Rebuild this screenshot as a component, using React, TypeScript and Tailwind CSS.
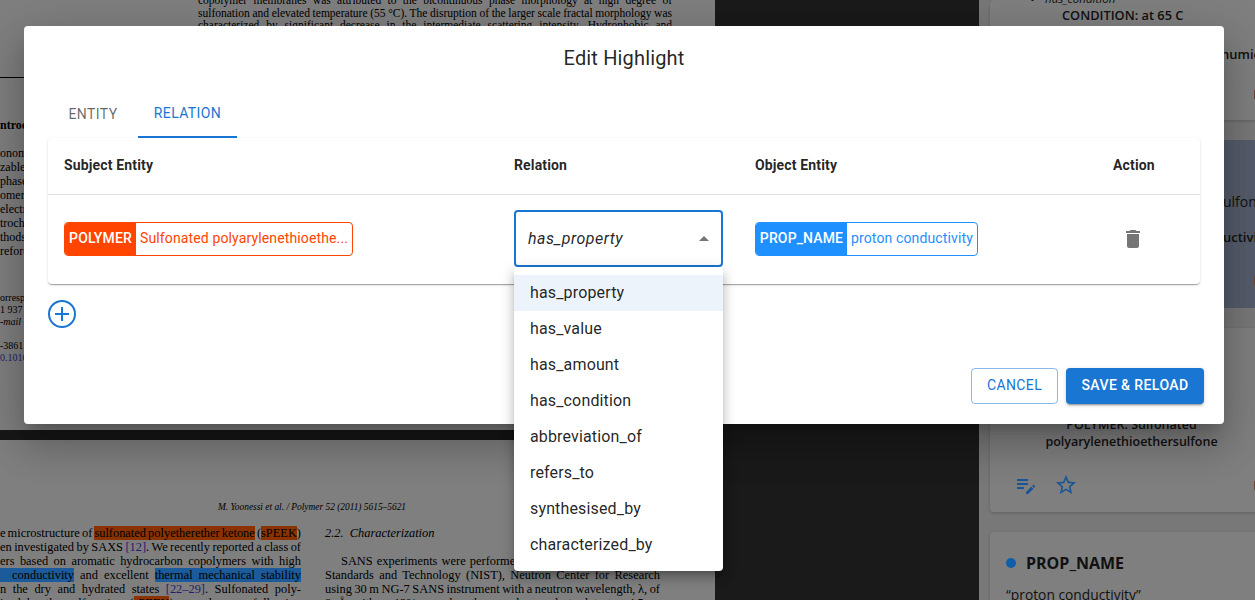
import React from "react";

const ROBOTO = "font-['Roboto',sans-serif]";
const SERIF = "font-['Liberation_Serif',serif]";
const PANEL = "font-['Open_Sans',sans-serif]";

function Icon({ d, size, className }: { d: string; size: number; className?: string }) {
  return (
    <svg viewBox="0 0 24 24" width={size} height={size} fill="currentColor" className={`shrink-0 ${className ?? ""}`}>
      <path d={d} />
    </svg>
  );
}

const O = ({ children }: { children: React.ReactNode }) => <span className="bg-[#8b3300]">{children}</span>;
const B = ({ children }: { children: React.ReactNode }) => <span className="bg-[#1b5a9b]">{children}</span>;
const C = ({ children }: { children: React.ReactNode }) => <span className="text-[#241a70]">{children}</span>;

function J({ children, className = "" }: { children: React.ReactNode; className?: string }) {
  return <div className={`whitespace-nowrap text-justify [text-align-last:justify] [word-spacing:-1.2px] ${className}`}>{children}</div>;
}

function PdfPages() {
  return (
    <div className={`flex w-[715px] shrink-0 flex-col text-black ${SERIF}`}>
      <div className="flex h-[430px] bg-[#7f7f7f]">
        <div className="w-[198px] shrink-0 text-[12px] leading-[14px]">
          <div className="mt-[77px] h-px w-[198px] bg-black" />
          <div className="mt-[40px] font-bold">ntroduction</div>
          <div className="mt-[14px] flex flex-col">
            <span>onomer</span>
            <span>zable</span>
            <span>phase</span>
            <span>omers</span>
            <span>electro</span>
            <span>trochem</span>
            <span>thods</span>
            <span>refore</span>
          </div>
          <div className="mt-[34px] flex flex-col text-[10px] leading-[12px]">
            <span>orresp</span>
            <span>1 937</span>
            <span className="italic">-mail</span>
            <span className="h-[12px]" />
            <span>-3861</span>
            <span className="text-[#241a70]">0.1016</span>
          </div>
        </div>
        <div className="-mt-[6px] w-[474px] text-[11.5px] leading-[12.5px]">
          <J>copolymer membranes was attributed to the bicontinuous phase morphology at high degree of</J>
          <J>sulfonation and elevated temperature (55 °C). The disruption of the larger scale fractal morphology was</J>
          <J>characterized by significant decrease in the intermediate scattering intensity. Hydrophobic and</J>
        </div>
      </div>
      <div className="h-[10px] bg-[#171717]" />
      <div className="flex-1 overflow-hidden bg-[#7f7f7f]">
        <div className="mt-[61px] ml-[218px] whitespace-nowrap text-[9.4px] italic leading-[12px]">
          M. Yoonessi et al. / Polymer 52 (2011) 5615–5621
        </div>
        <div className="mt-[13px] flex text-[12.4px] leading-[14px]">
          <div className="w-[301px] shrink-0">
            <J>e microstructure of <O>sulfonated polyetherether ketone</O> (<O>sPEEK</O>)</J>
            <J>en investigated by SAXS <C>[12]</C>. We recently reported a class of</J>
            <J>ers based on aromatic hydrocarbon copolymers with high</J>
            <J><B>&nbsp;&nbsp;conductivity</B> and excellent <B>thermal mechanical stability</B></J>
            <J>n the dry and hydrated states <C>[22–29]</C>. Sulfonated poly-</J>
            <J>ized by the sulfonation (<O>sPEEK</O>) was done as following</J>
          </div>
          <div className="ml-[24px] w-[335px] shrink-0">
            <div className="italic">2.2.&nbsp;&nbsp;Characterization</div>
            <div className="h-[14px]" />
            <J className="pl-[16px]">SANS experiments were performed at the National Institute of</J>
            <J>Standards and Technology (NIST), Neutron Center for Research</J>
            <J>using 30 m NG-7 SANS instrument with a neutron wavelength, λ, of</J>
            <J>8 Å with a 12% wavelength spread, sample-to-detector 4.5 m</J>
          </div>
        </div>
      </div>
    </div>
  );
}

function Marker() {
  return <div className="ml-[264px] h-[9px] w-px bg-[#684535]" />;
}

const CARD_SHADOW = "shadow-[0_1px_3px_rgba(0,0,0,0.2)]";

function SidePanel() {
  return (
    <div className={`flex w-[276px] shrink-0 flex-col gap-5 overflow-hidden bg-[#787878] pl-[11px] text-[#111] ${PANEL}`}>
      <div className={`h-[120px] w-[290px] shrink-0 overflow-hidden rounded-l bg-[#7f7f7f] ${CARD_SHADOW}`}>
        <div className="-mt-[8px] ml-[41px] flex items-center gap-[11px] text-[11.5px] italic leading-[14px]">
          <span className="h-[3px] w-[3px] rounded-full bg-[#111]" />
          <span>has_condition</span>
        </div>
        <div className="ml-[72px] text-[12.8px] font-semibold leading-[18px]">CONDITION: at 65 C</div>
        <div className="ml-[231px] mt-[21px] whitespace-nowrap text-[13px] font-semibold leading-[18px]">humidity</div>
        <div className="mt-[27px]"><Marker /></div>
      </div>
      <div className="h-[168px] w-[290px] shrink-0 overflow-hidden rounded-l bg-[#565c6b]">
        <div className="ml-[233px] mt-[53px] whitespace-nowrap text-[14px] leading-[18px]">ulfonated</div>
        <div className="ml-[233px] mt-[17px] whitespace-nowrap text-[13px] font-semibold leading-[18px]">uctivity</div>
        <div className="mt-[30px]"><Marker /></div>
      </div>
      <div className={`h-[184px] w-[290px] shrink-0 overflow-hidden rounded-l bg-[#7f7f7f] ${CARD_SHADOW}`}>
        <div className="mt-[88px] w-[283px] text-center text-[12.5px] font-semibold leading-[17px]">
          <div>POLYMER: Sulfonated</div>
          <div>polyarylenethioethersulfone</div>
        </div>
        <div className="ml-[24px] mt-[23px] flex items-center gap-[16px]">
          <Icon size={24} className="text-[#1a5596]" d="M3 10h11v2H3v-2zm0-2h11V6H3v2zm0 8h7v-2H3v2zm15.01-3.13.71-.71c.39-.39 1.02-.39 1.41 0l.71.71c.39.39.39 1.02 0 1.41l-.71.71-2.12-2.12zm-.71.71-5.3 5.3V21h2.12l5.3-5.3-2.12-2.12z" />
          <Icon size={24} className="text-[#1a5596]" d="M22 9.24l-7.19-.62L12 2 9.19 8.63 2 9.24l5.46 4.73L5.82 21 12 17.27 18.18 21l-1.63-7.03L22 9.24zM12 15.4l-3.76 2.27 1-4.28-3.32-2.88 4.38-.38L12 6.1l1.71 4.04 4.38.38-3.32 2.88 1 4.28L12 15.4z" />
          <div className="ml-[160px] h-[9px] w-px shrink-0 bg-[#684535]" />
        </div>
      </div>
      <div className={`h-[100px] w-[290px] shrink-0 rounded-l bg-[#7f7f7f] ${CARD_SHADOW}`}>
        <div className="ml-[16px] mt-[20px] flex items-center gap-[10px]">
          <span className="h-[10px] w-[10px] rounded-full bg-[#0f5ea8]" />
          <span className="text-[16px] font-bold leading-[22px]">PROP_NAME</span>
        </div>
        <div className="ml-[16px] mt-[11px] text-[13.8px] leading-[20px]">“proton conductivity”</div>
      </div>
    </div>
  );
}

function Chip({ label, text, labelW, color }: { label: string; text: string; labelW: string; color: "red" | "blue" }) {
  const border = color === "red" ? "border-[#ff4500] text-[#ff4500]" : "border-[#1e90ff] text-[#1e90ff]";
  const bg = color === "red" ? "bg-[#ff4500]" : "bg-[#1e90ff]";
  return (
    <div className={`flex h-[34px] w-fit items-stretch overflow-hidden rounded border bg-white text-[14px] tracking-[0.13px] ${border}`}>
      <span className={`flex items-center justify-center font-medium text-white ${bg} ${labelW}`}>{label}</span>
      <span className="flex items-center px-[4px]">{text}</span>
    </div>
  );
}

const OPTIONS = [
  "has_property",
  "has_value",
  "has_amount",
  "has_condition",
  "abbreviation_of",
  "refers_to",
  "synthesised_by",
  "characterized_by",
];

function Modal() {
  return (
    <div className={`absolute left-[24px] top-[26px] flex h-[398px] w-[1200px] flex-col rounded bg-white shadow-[0_11px_15px_-7px_rgba(0,0,0,0.2),0_24px_38px_3px_rgba(0,0,0,0.14),0_9px_46px_8px_rgba(0,0,0,0.12)] ${ROBOTO}`}>
      <h2 className="flex h-[64px] items-center justify-center text-[20px] font-normal tracking-[0.15px] text-black/[0.87]">
        Edit Highlight
      </h2>
      <div className="flex h-[48px] px-[24px] text-[14px] font-normal tracking-[0.4px]">
        <div className="flex w-[90px] items-center justify-center text-black/60">ENTITY</div>
        <div className="flex w-[99px] items-center justify-center border-b-2 border-[#1976d2] text-[#1976d2]">RELATION</div>
      </div>
      <div className="mx-[24px] rounded bg-white shadow-[0_2px_1px_-1px_rgba(0,0,0,0.2),0_1px_1px_0_rgba(0,0,0,0.14),0_1px_3px_0_rgba(0,0,0,0.12)]">
        <div className="grid h-[57px] grid-cols-[450px_241px_358px_103px] items-center border-b border-[#e0e0e0] pb-[2px] text-[14px] font-bold tracking-[0.15px] text-black/[0.87]">
          <div className="pl-[16px]">Subject Entity</div>
          <div className="pl-[16px]">Relation</div>
          <div className="pl-[16px]">Object Entity</div>
          <div className="pl-[16px]">Action</div>
        </div>
        <div className="grid h-[89px] grid-cols-[450px_241px_358px_103px] items-center pb-[2px]">
          <div className="pl-[16px]">
            <Chip color="red" label="POLYMER" labelW="w-[71px]" text="Sulfonated polyarylenethioethe..." />
          </div>
          <div className="pl-[16px]">
            <div className="relative">
              <div className="flex h-[57px] w-[209px] items-center justify-between rounded border-2 border-[#1976d2] pl-[12px] pr-[12px] text-[16px] italic tracking-[0.45px] text-black/[0.87]">
                <span>has_property</span>
                <svg width="10" height="5" viewBox="0 0 10 5" fill="#757575"><path d="M0 5l5-5 5 5z" /></svg>
              </div>
              <ul className="absolute left-0 top-[57px] z-10 w-[209px] rounded bg-white py-[8px] text-[16px] tracking-[0.15px] text-black/[0.87] shadow-[0_5px_5px_-3px_rgba(0,0,0,0.2),0_8px_10px_1px_rgba(0,0,0,0.14),0_3px_14px_2px_rgba(0,0,0,0.12)]">
                {OPTIONS.map((o, i) => (
                  <li key={o} className={`flex h-[36px] items-center pl-[16px] ${i === 0 ? "bg-[#edf3fa]" : ""}`}>{o}</li>
                ))}
              </ul>
            </div>
          </div>
          <div className="pl-[16px]">
            <Chip color="blue" label="PROP_NAME" labelW="w-[91px]" text="proton conductivity" />
          </div>
          <div className="flex pl-[24px] text-[#757575]">
            <Icon size={24} d="M6 19c0 1.1.9 2 2 2h8c1.1 0 2-.9 2-2V7H6v12zM19 4h-3.5l-1-1h-5l-1 1H5v2h14V4z" />
          </div>
        </div>
      </div>
      <div className="ml-[24px] mt-[16px] text-[#1976d2]">
        <svg width="28" height="28" viewBox="0 0 28 28" fill="none" stroke="currentColor" strokeWidth="2">
          <circle cx="14" cy="14" r="13" />
          <path d="M7 14h14M14 7v14" />
        </svg>
      </div>
      <div className="mt-auto flex justify-end gap-[8px] pb-[20px] pr-[20px] text-[14px] font-medium tracking-[0.4px]">
        <button className="flex h-[36px] w-[87px] items-center justify-center rounded border border-[#1976d2]/50 pb-px font-normal text-[#1976d2]">CANCEL</button>
        <button className="flex h-[36px] w-[138px] items-center justify-center rounded bg-[#1976d2] pb-[2px] text-white shadow-[0_3px_1px_-2px_rgba(0,0,0,0.2),0_2px_2px_0_rgba(0,0,0,0.14),0_1px_5px_0_rgba(0,0,0,0.12)]">SAVE &amp; RELOAD</button>
      </div>
    </div>
  );
}

export default function App() {
  return (
    <div className="relative flex h-[600px] w-[1255px] overflow-hidden">
      <PdfPages />
      <div className="w-[264px] shrink-0 bg-[#1a1a1a]" />
      <SidePanel />
      <Modal />
    </div>
  );
}
